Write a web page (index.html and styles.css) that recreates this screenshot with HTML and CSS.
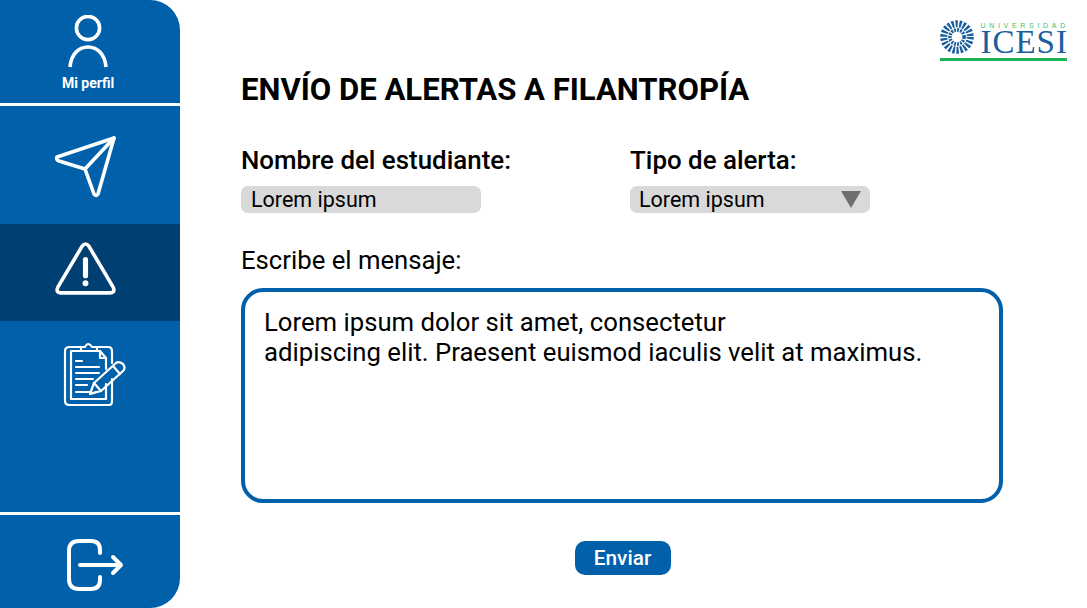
FILE: index.html
```html
<!DOCTYPE html>
<html lang="es">
<head>
<meta charset="utf-8">
<title>Envío de alertas a filantropía</title>
<link rel="stylesheet" href="styles.css">
</head>
<body>
<div class="app">
  <nav class="sidebar">
    <div class="nav-profile">
      <svg class="icon-user" width="40" height="54" viewBox="0 0 40 54" fill="none" stroke="#fff" stroke-width="3.6">
        <circle cx="20" cy="13" r="11.6"/>
        <path d="M2 52 C3 40 10 32 20 32 C30 32 37 40 38 52"/>
      </svg>
      <span class="nav-label">Mi perfil</span>
    </div>
    <div class="nav-send">
      <svg width="64" height="64" viewBox="0 0 64 64" fill="none" stroke="#fff" stroke-width="3.6" stroke-linejoin="round" stroke-linecap="round">
        <path d="M60 3 L3 22 Q1.500 24.500 5 26 L31 34 L40 59 Q42.500 62 44 59 Z"/>
        <path d="M60 3 L31 34"/>
      </svg>
    </div>
    <div class="nav-alert">
      <svg width="61" height="54" viewBox="0 0 64 56" fill="none" stroke="#fff" stroke-width="3.8" stroke-linejoin="round" stroke-linecap="round">
        <path d="M28.500 4 Q32 -0.500 35.500 4 L61 47 Q63.500 53 58 53 L6 53 Q0.500 53 3 47 Z"/>
        <path d="M32 18 L32 35" stroke-width="5.400"/>
        <circle cx="32" cy="43" r="3.100" fill="#fff" stroke="none"/>
      </svg>
    </div>
    <div class="nav-notes">
      <svg width="64" height="64" viewBox="0 0 64 64" fill="none" stroke="#fff" stroke-width="2.200" stroke-linejoin="round" stroke-linecap="round">
        <path d="M18 5 L7 5 Q2 5 2 9 L2 59 Q2 63 7 63 L46 63 Q49 63 49 59 L49 37"/>
        <path d="M34 5 L45 5 Q49 5 49 9 L49 21"/>
        <path d="M18 9 L18 5 L22 5 Q25 -1 29 5 L34 5 L34 9 Z"/>
        <path d="M18 9 L8 9 L8 57 L43 57 L43 42"/>
        <path d="M34 9 L37 9 L43 16 L43 27"/>
        <path d="M37 9 L37 16 L43 16"/>
        <path d="M13 19 L19 19 M13 25 L36 25 M13 31 L36 31 M13 37 L30 37 M13 43 L24 43 M13 50 L28 50" stroke-width="2.200"/>
        <path d="M27 52 L31 41 L53 21 Q56 19 60 22 Q63 26 60 29 L38 49 Z"/>
        <path d="M31 41 L38 49 M27 52 L33 50 M50 24 L57 32"/>
      </svg>
    </div>
    <div class="nav-spacer"></div>
    <div class="nav-logout">
      <svg width="58" height="52" viewBox="0 0 58 52" fill="none" stroke="#fff" stroke-width="4" stroke-linecap="round" stroke-linejoin="round">
        <path d="M33 14 L33 11 Q33 2 24 2 L12 2 Q2 2 2 12 L2 40 Q2 50 12 50 L24 50 Q33 50 33 41 L33 38"/>
        <path d="M13 26 L54 26 M46 18 L54 26 L46 34"/>
      </svg>
    </div>
  </nav>

  <main class="content">
    <header class="logo">
      <svg class="logo-wheel" width="34" height="34" viewBox="0 0 36 36" fill="none" stroke="#1a5e9e">
        <circle cx="18" cy="18" r="14" stroke-width="7.500" stroke-dasharray="2.400 1.600"/>
        <circle cx="18" cy="18" r="7.500" stroke-width="3.800" stroke-dasharray="2 1.200"/>
      </svg>
      <div class="logo-text">
        <span class="logo-top">UNIVERSIDAD</span>
        <span class="logo-name">ICESI</span>
      </div>
    </header>

    <h1 class="title">ENVÍO DE ALERTAS A FILANTROPÍA</h1>

    <div class="fields">
      <div class="field">
        <label class="label">Nombre del estudiante:</label>
        <div class="input">Lorem ipsum</div>
      </div>
      <div class="field">
        <label class="label">Tipo de alerta:</label>
        <div class="input select">Lorem ipsum<span class="arrow"></span></div>
      </div>
    </div>

    <p class="message-label">Escribe el mensaje:</p>
    <div class="message">Lorem ipsum dolor sit amet, consectetur<br>adipiscing elit. Praesent euismod iaculis velit at maximus.</div>

    <div class="actions"><button class="send" type="button">Enviar</button></div>
  </main>
</div>
</body>
</html>
```
FILE: styles.css
```css
* { box-sizing: border-box; }
html, body { margin: 0; height: 100%; }
body { background: #fff; color: #000; font-family: Roboto, "Liberation Sans", sans-serif; overflow: hidden; }
.app { display: flex; width: 1087px; height: 608px; }

.sidebar {
  width: 180px; height: 608px; flex: none;
  background: #0060aa;
  border-radius: 0 30px 30px 0;
  display: flex; flex-direction: column; align-items: stretch;
}
.sidebar > div { display: flex; align-items: center; justify-content: center; }
.nav-profile { height: 106px; border-bottom: 3px solid #fff; flex-direction: column; justify-content: flex-start !important; padding: 15px 4px 0 0; }
.nav-label { color: #fff; font-size: 14px; font-weight: 700; line-height: 16px; margin-top: 6px; }
.icon-user { display: block; }
.nav-send { height: 118px; padding: 4px 8px 0 0; }
.nav-alert { height: 97px; background: #003f72; padding: 0 10px 7px 0; }
.nav-notes { height: 108px; padding: 0 0 3px 10px; }
.nav-spacer { flex: 1; }
.nav-logout { height: 96px; border-top: 3px solid #fff; padding: 6px 0 0 11px; }

.content { flex: 1; padding: 20px 20px 0 61px; display: flex; flex-direction: column; position: relative; }

.logo { display: flex; justify-content: flex-end; align-items: flex-start; height: 41px; gap: 6px; }
.logo-text { display: flex; flex-direction: column; margin-right: -2px; }
.logo-wheel { display: block; }
.logo-top { font-family: "Liberation Sans", sans-serif; font-size: 7px; line-height: 9px; letter-spacing: 3.700px; color: #3dc06a; margin-top: 1px; white-space: nowrap; }
.logo-name { font-family: "Liberation Serif", serif; font-size: 33px; line-height: 24px; letter-spacing: 1px; color: #1a5e9e; }
.logo::after { content: ""; position: absolute; right: 20px; top: 58px; width: 127px; height: 3px; background: #1fb25a; }

.title { margin: 9px 0 0; font-size: 31.100px; font-weight: 700; line-height: 40px; height: 40px; white-space: nowrap; }

.fields { display: flex; gap: 149px; margin-top: 35px; }
.field { width: 240px; }
.label { display: block; font-size: 25.900px; font-weight: 500; line-height: 30px; white-space: nowrap; }
.input { height: 27px; margin-top: 11px; background: #d9d9d9; border-radius: 7px; padding-left: 10px; font-size: 21.500px; line-height: 27px; position: relative; }
.select { display: flex; align-items: center; justify-content: space-between; padding: 0 9px; }
.arrow { width: 0; height: 0; border-left: 10px solid transparent; border-right: 10px solid transparent; border-top: 17px solid #6e6e6e; }

.message-label { margin: 32px 0 0; font-size: 25.700px; line-height: 30px; }
.message { width: 762px; height: 215px; margin-top: 13px; border: 4px solid #0060aa; border-radius: 22px; padding: 15px 19px; font-size: 25.700px; line-height: 30px; white-space: nowrap; }

.actions { width: 762px; display: flex; justify-content: center; margin-top: 38px; }
.send { width: 96px; height: 34px; border: 0; border-radius: 10px; background: #0060aa; color: #fff; font-family: inherit; font-size: 20.800px; font-weight: 500; padding: 0; margin-left: 1px; }
```
